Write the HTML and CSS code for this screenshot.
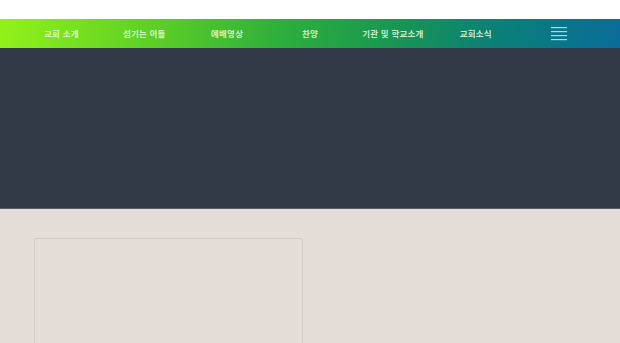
FILE: index.html
```html
<!DOCTYPE html>
<html lang="ko">
<head>
<meta charset="utf-8">
<title>교회</title>
<link rel="stylesheet" href="styles.css">
</head>
<body>
<header class="top"></header>
<nav class="gnb">
  <ul class="menu">
    <li>교회 소개</li>
    <li>섬기는 이들</li>
    <li>예배영상</li>
    <li>찬양</li>
    <li>기관 및 학교소개</li>
    <li>교회소식</li>
    <li class="burger">
      <svg width="16" height="14" viewBox="0 0 16 14" aria-hidden="true">
        <rect x="0" y="0" width="16" height="1.2" fill="#9fdde4"/>
        <rect x="0" y="4" width="16" height="1.2" fill="#9fdde4"/>
        <rect x="0" y="8" width="16" height="1.2" fill="#9fdde4"/>
        <rect x="0" y="12" width="16" height="1.2" fill="#9fdde4"/>
      </svg>
    </li>
  </ul>
</nav>
<section class="hero"></section>
<main class="content">
  <div class="card"></div>
</main>
</body>
</html>
```
FILE: styles.css
```css
* { box-sizing: border-box; }
html, body { margin: 0; padding: 0; }
body {
  font-family: "Noto Sans CJK KR", "Noto Sans", sans-serif;
  background: #e4dcd6;
  overflow: hidden;
}
.top { height: 19px; background: #ffffff; }
.gnb {
  height: 29px;
  background: linear-gradient(100deg, #92f21a 0%, #5ccf26 25%, #2faf3c 45%, #1a9850 62%, #0b7f78 80%, #0a6c9a 100%);
}
.menu {
  list-style: none;
  margin: 0;
  padding: 0 20px;
  height: 100%;
  display: grid;
  grid-template-columns: repeat(7, 1fr);
  align-items: center;
}
.menu li {
  text-align: center;
  color: rgba(235, 255, 225, 0.85);
  font-size: 8.5px;
  font-weight: 700;
  letter-spacing: 0.2px;
  line-height: 1;
}
.burger { display: flex; justify-content: center; padding-top: 1px; }
.burger svg { display: block; }
.hero {
  height: 161px;
  background: #323a48;
  border-bottom: 1px solid #5a5e66;
}
.content { padding: 29px 0 0 34px; }
.card {
  width: 269px;
  height: 140px;
  border: 1px solid #d2cac5;
  border-radius: 2px;
  background: #e4dcd6;
}
```
